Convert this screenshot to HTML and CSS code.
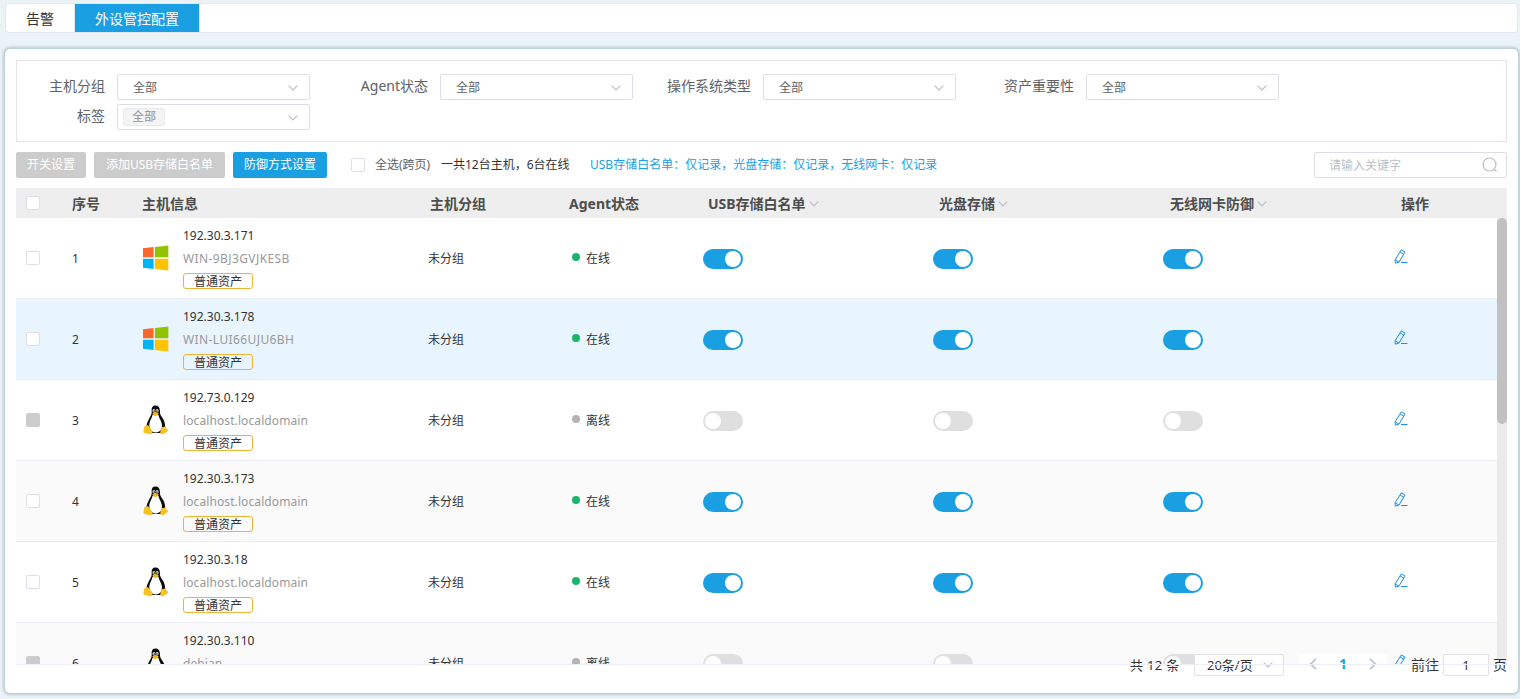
FILE: index.html
```
<!DOCTYPE html>
<html lang="zh-CN">
<head>
  <meta charset="UTF-8" />
  <meta name="viewport" content="width=device-width, initial-scale=1" />
  <title>外设管控配置</title>
  <link rel="stylesheet" href="styles.css">
</head>
<body>
  <svg class="sprite" aria-hidden="true">
    <symbol id="down" viewBox="0 0 10 6"><path d="M.7.7 5 5 9.300.7" fill="none" stroke="currentColor" stroke-width="1.1"/></symbol>
    <symbol id="left" viewBox="0 0 8 12"><path d="M7 .8 1.500 6 7 11.200" fill="none" stroke="currentColor" stroke-width="1.8"/></symbol>
    <symbol id="right" viewBox="0 0 8 12"><path d="M1 .8 6.500 6 1 11.200" fill="none" stroke="currentColor" stroke-width="1.8"/></symbol>
    <symbol id="search" viewBox="0 0 16 16"><circle cx="7.500" cy="7.500" r="6.500" fill="none" stroke="currentColor" stroke-width="1.200"/><path d="M12 12 14.500 14.500" stroke="currentColor" stroke-width="1.300"/></symbol>
    <symbol id="edit" viewBox="0 0 14 15"><path d="M7.300.9 11 3.100 5 13 1.300 14.200 1.100 10.800ZM6.100 3 9.800 5.200M1.200 10.900 4.800 13M7 13.500H13.500" fill="none" stroke="currentColor" stroke-width="1"/></symbol>
    <symbol id="windows" viewBox="0 0 27 26">
      <path d="M0 3 11 1.700V12.300H0Z" fill="#f8682c"/>
      <path d="M12.300 1.500 26.300 0V12.300H12.300Z" fill="#91c300"/>
      <path d="M0 13.700H11V24.300L0 23Z" fill="#00b4f2"/>
      <path d="M12.300 13.700H26.300V26L12.300 24.500Z" fill="#ffc300"/>
    </symbol>
    <symbol id="linux" viewBox="0 0 26 30">
      <path d="M12.500.5C9.200.5 8.400 3 8.700 6.200 8.900 9.500 7.500 11 5.800 14.200 4.500 16.800 3.200 19.500 3.400 23L8 28H18L22 23C22.500 19 21.500 15.500 19 12.200 16.800 9.300 17 8 16.900 5.300 16.700 2 15.200.5 12.500.5Z" fill="#0b0b0b"/>
      <path d="M9.500 10C9 13 6.800 15.500 6.300 19.200 6 23.500 8.500 27.500 12.600 27.500S19 24.500 19 20.500C19 16.500 16 13.500 15.500 10Z" fill="#fff"/>
      <ellipse cx="10.900" cy="5.800" rx="1.400" ry="1.800" fill="#ddd"/><ellipse cx="14.100" cy="5.800" rx="1.500" ry="1.800" fill="#ddd"/>
      <circle cx="11.200" cy="6" r=".7"/><circle cx="13.900" cy="6" r=".7"/>
      <path d="M9.300 8.500C10.500 7.200 12 6.600 13 7L15.900 8.600C15.300 10 13.500 10.900 12.300 10.900 11 10.900 9.900 10 9.300 8.500Z" fill="#f0b41c"/>
      <path d="M1.200 21.300C2.800 21.500 4 19.700 5.100 20.300L9.200 25.500C10.200 27.200 9.300 29.300 7 29.300 4.800 28.800 2.500 28.400.7 27.700.1 26.400.9 23.500 1.200 21.300Z" fill="#f6c325"/>
      <path d="M18.300 21.200C19.700 22.400 21.500 22.300 22.300 21 23 22.500 23.300 23.800 25.100 24.700 25.500 26.200 23 27 20.800 28.900 19.300 29.900 17.300 29.200 17.200 27.500Z" fill="#f6c325"/>
    </symbol>
  </svg>

  <nav class="tabs">
    <a class="tab">告警</a>
    <a class="tab active">外设管控配置</a>
  </nav>

  <main class="card">
    <section class="filters">
      <label class="field"><span class="field-name">主机分组</span><span class="select">全部<svg class="arrow"><use href="#down"/></svg></span></label>
      <label class="field"><span class="field-name">Agent状态</span><span class="select">全部<svg class="arrow"><use href="#down"/></svg></span></label>
      <label class="field"><span class="field-name">操作系统类型</span><span class="select">全部<svg class="arrow"><use href="#down"/></svg></span></label>
      <label class="field"><span class="field-name">资产重要性</span><span class="select">全部<svg class="arrow"><use href="#down"/></svg></span></label>
      <label class="field"><span class="field-name">标签</span><span class="select multi"><span class="chip">全部</span><svg class="arrow"><use href="#down"/></svg></span></label>
    </section>

    <section class="toolbar">
      <button class="btn disabled w-switch">开关设置</button>
      <button class="btn disabled w-usb">添加USB存储白名单</button>
      <button class="btn w-mode">防御方式设置</button>
      <span class="check"></span>
      <span class="all">全选(跨页)</span>
      <span class="total">一共12台主机，6台在线</span>
      <span class="modes">USB存储白名单：仅记录，光盘存储：仅记录，无线网卡：仅记录</span>
      <span class="search">请输入关键字<svg class="search-icon"><use href="#search"/></svg></span>
    </section>

    <section class="table">
      <div class="thead">
        <span><i class="check"></i></span>
        <span>序号</span>
        <span>主机信息</span>
        <span>主机分组</span>
        <span>Agent状态</span>
        <span>USB存储白名单<svg class="arrow"><use href="#down"/></svg></span>
        <span>光盘存储<svg class="arrow"><use href="#down"/></svg></span>
        <span>无线网卡防御<svg class="arrow"><use href="#down"/></svg></span>
        <span>操作</span>
      </div>
      <div class="tbody">
        <div class="rows">
          <div class="row">
            <i class="check"></i>
            <span>1</span>
            <div class="host">
              <svg class="os win"><use href="#windows"/></svg>
              <div class="host-text"><span>192.30.3.171</span><span class="name">WIN-9BJ3GVJKESB</span><span class="asset">普通资产</span></div>
            </div>
            <span>未分组</span>
            <span class="status on">在线</span>
            <i class="switch on"></i>
            <i class="switch on"></i>
            <i class="switch on"></i>
            <svg class="edit"><use href="#edit"/></svg>
          </div>
          <div class="row hover">
            <i class="check"></i>
            <span>2</span>
            <div class="host">
              <svg class="os win"><use href="#windows"/></svg>
              <div class="host-text"><span>192.30.3.178</span><span class="name">WIN-LUI66UJU6BH</span><span class="asset">普通资产</span></div>
            </div>
            <span>未分组</span>
            <span class="status on">在线</span>
            <i class="switch on"></i>
            <i class="switch on"></i>
            <i class="switch on"></i>
            <svg class="edit"><use href="#edit"/></svg>
          </div>
          <div class="row">
            <i class="check off"></i>
            <span>3</span>
            <div class="host">
              <svg class="os"><use href="#linux"/></svg>
              <div class="host-text"><span>192.73.0.129</span><span class="name linux">localhost.localdomain</span><span class="asset">普通资产</span></div>
            </div>
            <span>未分组</span>
            <span class="status">离线</span>
            <i class="switch"></i>
            <i class="switch"></i>
            <i class="switch"></i>
            <svg class="edit"><use href="#edit"/></svg>
          </div>
          <div class="row striped">
            <i class="check"></i>
            <span>4</span>
            <div class="host">
              <svg class="os"><use href="#linux"/></svg>
              <div class="host-text"><span>192.30.3.173</span><span class="name linux">localhost.localdomain</span><span class="asset">普通资产</span></div>
            </div>
            <span>未分组</span>
            <span class="status on">在线</span>
            <i class="switch on"></i>
            <i class="switch on"></i>
            <i class="switch on"></i>
            <svg class="edit"><use href="#edit"/></svg>
          </div>
          <div class="row">
            <i class="check"></i>
            <span>5</span>
            <div class="host">
              <svg class="os"><use href="#linux"/></svg>
              <div class="host-text"><span>192.30.3.18</span><span class="name linux">localhost.localdomain</span><span class="asset">普通资产</span></div>
            </div>
            <span>未分组</span>
            <span class="status on">在线</span>
            <i class="switch on"></i>
            <i class="switch on"></i>
            <i class="switch on"></i>
            <svg class="edit"><use href="#edit"/></svg>
          </div>
          <div class="row striped">
            <i class="check off"></i>
            <span>6</span>
            <div class="host">
              <svg class="os"><use href="#linux"/></svg>
              <div class="host-text"><span>192.30.3.110</span><span class="name linux">debian</span><span class="asset">普通资产</span></div>
            </div>
            <span>未分组</span>
            <span class="status">离线</span>
            <i class="switch"></i>
            <i class="switch"></i>
            <i class="switch"></i>
            <svg class="edit"><use href="#edit"/></svg>
          </div>
        </div>
        <div class="scrollbar"><div class="thumb"></div></div>
      </div>
    </section>

    <div class="pagination">
      <span class="count">共 12 条</span>
      <span class="size">20条/页<svg class="arrow"><use href="#down"/></svg></span>
      <span class="pager">
        <svg class="turn"><use href="#left"/></svg>
        <b>1</b>
        <svg class="turn"><use href="#right"/></svg>
      </span>
      <span class="goto">前往</span>
      <span class="page-input">1</span>
      <span class="unit">页</span>
    </div>
  </main>
</body>
</html>
```
FILE: styles.css
```
* {
  box-sizing: border-box;
}
body {
  margin: 0;
  padding: 3px 2px 0 5px;
  height: 699px;
  overflow: hidden;
  background: #ebf3f7;
  font-family: "Noto Sans", "Noto Sans CJK SC", sans-serif;
  font-size: 12px;
  color: #333;
  white-space: nowrap;
}
.sprite {
  display: none;
}

/* tabs */
.tabs {
  display: flex;
  height: 30px;
  background: #fff;
  border: 1px solid #e4e7ed;
  border-radius: 4px;
}
.tab {
  width: 69px;
  line-height: 29px;
  text-align: center;
  font-size: 14px;
  border-right: 1px solid #e4e7ed;
}
.tab.active {
  width: 125px;
  background: #1a9fe3;
  color: #fff;
}

/* card */
.card {
  position: relative;
  height: 644px;
  margin-top: 16px;
  padding: 11px;
  background: #fff;
  border-radius: 5px;
  box-shadow: 0 0 3px 2px #b7c9d2;
}
.arrow {
  width: 10px;
  height: 6px;
  color: #b8bdc7;
}
.check {
  display: block;
  width: 14px;
  height: 14px;
  border: 1px solid #dcdfe6;
  border-radius: 2px;
  background: #fff;
}
.check.off {
  background: #ccc;
  border-color: #ccc;
}

.filters {
  display: grid;
  grid-template-columns: repeat(4, 323px);
  grid-auto-rows: 26px;
  row-gap: 4px;
  align-content: start;
  height: 82px;
  padding-top: 13px;
  border: 1px solid #e4e4e8;
}
.field {
  display: flex;
  gap: 12px;
}
.field-name {
  width: 88px;
  text-align: right;
  font-size: 14px;
  line-height: 24px;
  color: #606266;
}
.select {
  display: flex;
  align-items: center;
  justify-content: space-between;
  width: 193px;
  height: 26px;
  padding: 0 11px 1px 15px;
  border: 1px solid #dcdfe6;
  border-radius: 2px;
  color: #606266;
}
.select .arrow {
  margin-top: 2px;
}
.select.multi {
  padding-left: 5px;
}
.chip {
  width: 42px;
  height: 18px;
  line-height: 15px;
  text-align: center;
  background: #f4f4f5;
  border: 1px solid #e9e9eb;
  border-radius: 3px;
  color: #909399;
}

/* toolbar */
.toolbar {
  display: flex;
  align-items: center;
  height: 26px;
  margin: 10px 0;
}
.btn {
  height: 26px;
  margin-right: 8px;
  padding: 0 0 2px;
  border: 0;
  border-radius: 2px;
  background: #1a9fe3;
  color: #fff;
  font: inherit;
}
.btn.disabled {
  background: #ccc;
}
.w-switch {
  width: 70px;
}
.w-usb {
  width: 131px;
}
.w-mode {
  width: 94px;
  margin-right: 24px;
}
.all,
.total,
.modes {
  padding-bottom: 2px;
}
.all {
  width: 66px;
  margin-left: 10px;
  color: #606266;
}
.total {
  width: 149px;
}
.modes {
  color: #1a9fe3;
}
.search {
  display: flex;
  align-items: center;
  justify-content: space-between;
  width: 193px;
  height: 26px;
  margin-left: auto;
  padding: 0 8px 1px 14px;
  border: 1px solid #dcdfe6;
  border-radius: 2px;
  color: #bbbfc8;
}
.search-icon {
  width: 16px;
  height: 16px;
  margin-top: 1px;
}

/* table */
.table {
  position: relative;
  height: 477px;
}
.table::after {
  content: "";
  position: absolute;
  z-index: 2;
  left: 0;
  right: 0;
  bottom: 0;
  height: 1px;
  background: #ebeef5;
}
.thead {
  display: grid;
  grid-template-columns: 46px 70px 288px 139px 139px 231px 231px 231px 1fr;
  align-items: center;
  height: 30px;
  padding: 0 0 1px 10px;
  background: #eee;
  font-size: 14px;
  font-weight: bold;
  color: #4d4d4d;
}
.thead .check {
  margin-top: 1px;
}
.thead .arrow {
  margin: 0 0 2px 3px;
}
.tbody {
  display: flex;
  height: 447px;
  overflow: hidden;
}
.rows {
  flex: 1;
}
.row {
  display: grid;
  grid-template-columns: 46px 71px 285px 144px 131px 230px 230px 231px 1fr;
  align-items: center;
  height: 81px;
  padding-left: 10px;
  border-bottom: 1px solid #ebeef5;
}
.row.striped {
  background: #fafafa;
}
.row.hover {
  background: #e8f5fe;
}
.host {
  display: flex;
  align-items: center;
  gap: 14px;
}
.os {
  width: 26px;
  height: 30px;
}
.os.win {
  height: 26px;
}
.host-text {
  display: flex;
  flex-direction: column;
  padding-bottom: 4px;
  line-height: 23px;
}
.name {
  color: #999;
  letter-spacing: .4px;
}
.name.linux {
  letter-spacing: .1px;
}
.asset {
  width: 70px;
  height: 16px;
  margin-top: 3px;
  line-height: 15px;
  text-align: center;
  border: 1px solid #efb336;
  border-radius: 3px;
}
.status {
  display: flex;
  align-items: center;
  gap: 6px;
}
.status::before {
  content: "";
  width: 8px;
  height: 8px;
  margin-bottom: 3px;
  border-radius: 50%;
  background: #b3b3b3;
}
.status.on::before {
  background: #19b56b;
}
.switch {
  display: flex;
  width: 40px;
  height: 20px;
  margin-top: 2px;
  padding: 2px;
  border-radius: 10px;
  background: #dfdfdf;
}
.switch::before {
  content: "";
  width: 16px;
  height: 16px;
  border-radius: 50%;
  background: #fff;
}
.switch.on {
  justify-content: flex-end;
  background: #1a9fe3;
}
.edit {
  width: 14px;
  height: 15px;
  margin-bottom: 3px;
  color: #1a8fe3;
}
.scrollbar {
  width: 10px;
  background: #ebebeb;
}
.thumb {
  height: 206px;
  border-radius: 5px;
  background: #c1c1c1;
}

/* pagination lies over the bottom of the table */
.pagination {
  position: absolute;
  z-index: 1;
  right: 11px;
  bottom: 17px;
  display: flex;
  align-items: center;
  height: 22px;
  font-size: 13px;
}
.count {
  width: 64px;
  padding-bottom: 2px;
  letter-spacing: .3px;
}
.size {
  display: flex;
  align-items: center;
  justify-content: space-between;
  width: 90px;
  height: 22px;
  margin-right: 15px;
  padding: 0 10px 1px 12px;
  background: #fff;
  border: 1px solid #e1e3e8;
  border-radius: 2px;
}
.pager {
  display: flex;
  align-items: center;
  justify-content: space-between;
  width: 88px;
  height: 22px;
  margin-right: 24px;
  padding: 0 10px 3px;
  background: #fff;
  color: #1a9fe3;
  font-size: 14px;
}
.turn {
  width: 8px;
  height: 12px;
  color: #c0c4cc;
}
.goto {
  width: 32px;
  padding-bottom: 2px;
  font-size: 14px;
}
.page-input {
  width: 46px;
  height: 22px;
  line-height: 20px;
  text-align: center;
  background: #fff;
  border: 1px solid #e1e3e8;
  border-radius: 2px;
}
.unit {
  width: 18px;
  padding-bottom: 2px;
  text-align: right;
  font-size: 14px;
}
```
